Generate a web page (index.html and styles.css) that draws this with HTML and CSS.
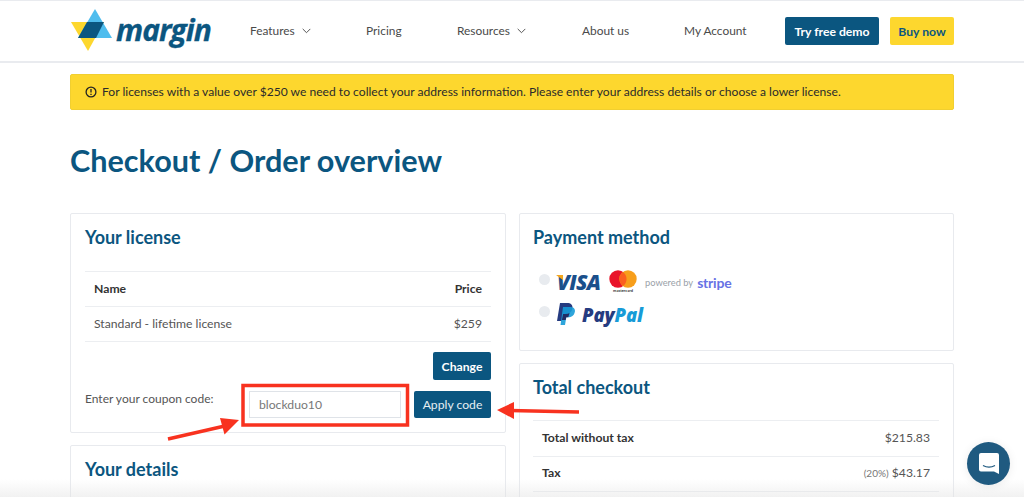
FILE: index.html
```html
<!DOCTYPE html>
<html lang="en">
<head>
<meta charset="utf-8">
<title>Checkout</title>
<link rel="stylesheet" href="styles.css">
</head>
<body>
<header class="topbar">
  <a class="brand">
    <svg class="brand-mark" width="46" height="44" viewBox="0 0 46 44">
      <polygon points="1,14 34,14 18,43" fill="#fdd72e"/>
      <polygon points="25,1 42,30 8,30" fill="#4fbdee"/>
      <polygon points="17,14 34,14 26,30 8,30" fill="#0b5680"/>
    </svg>
    <span class="brand-name">margin</span>
  </a>
  <nav class="nav">
    <a class="nav-link nav-features">Features <svg class="chev" width="9" height="6" viewBox="0 0 9 6"><path d="M.7.9 4.500 4.700 8.300.9" fill="none" stroke="#555" stroke-width="1"/></svg></a>
    <a class="nav-link nav-pricing">Pricing</a>
    <a class="nav-link nav-resources">Resources <svg class="chev" width="9" height="6" viewBox="0 0 9 6"><path d="M.7.9 4.500 4.700 8.300.9" fill="none" stroke="#555" stroke-width="1"/></svg></a>
    <a class="nav-link nav-about">About us</a>
    <a class="nav-link nav-account">My Account</a>
  </nav>
  <a class="btn btn-demo">Try free demo</a>
  <a class="btn btn-buy">Buy now</a>
</header>

<main class="page">
  <div class="alert">
    <svg class="alert-icon" width="12" height="12" viewBox="0 0 12 12"><circle cx="6" cy="6" r="4.900" fill="none" stroke="#222" stroke-width="1.300"/><path d="M6 3v3.600M6 7.800v1.200" stroke="#222" stroke-width="1.300"/></svg>
    <span>For licenses with a value over $250 we need to collect your address information. Please enter your address details or choose a lower license.</span>
  </div>

  <h1 class="title">Checkout / Order overview</h1>

  <div class="columns">
    <div class="col">
      <section class="card card-license">
        <h2 class="card-title">Your license</h2>
        <div class="license-table">
          <div class="row row-head"><b>Name</b><b>Price</b></div>
          <div class="row row-item"><span>Standard - lifetime license</span><span>$259</span></div>
        </div>
        <div class="change-row"><a class="btn btn-change">Change</a></div>
        <div class="coupon-row">
          <span class="coupon-label">Enter your coupon code:</span>
          <span class="coupon-input">blockduo10</span>
          <a class="btn btn-apply">Apply code</a>
        </div>
      </section>
      <section class="card card-details">
        <h2 class="card-title">Your details</h2>
      </section>
    </div>
    <div class="col">
      <section class="card card-payment">
        <h2 class="card-title">Payment method</h2>
        <div class="pay-row pay-card">
          <span class="radio"></span>
          <span class="visa">VISA</span>
          <span class="mc">
            <svg width="28" height="18" viewBox="0 0 28 18"><circle cx="9" cy="9" r="8.700" fill="#e9142a"/><circle cx="19" cy="9" r="8.700" fill="#f79e1b"/><path d="M14 2a8.700 8.700 0 0 1 0 14 8.700 8.700 0 0 1 0-14z" fill="#fb5f1f"/></svg>
            <span class="mc-name">mastercard</span>
          </span>
          <span class="powered">powered by</span>
          <span class="stripe">stripe</span>
        </div>
        <div class="pay-row pay-paypal">
          <span class="radio"></span>
          <svg class="pp-mark" width="19" height="22" viewBox="0 0 19 22"><path d="M4 0h7c4 0 6 2 5.400 5.500C15.700 9.500 13 11 9.500 11H7l-1.200 7H1z" fill="#253b80"/><path d="M7 4h7.500c3.500 0 5 2 4.300 5-.8 3.700-3.300 5.300-6.500 5.300h-2L9 22H4.500z" fill="#179bd7" opacity=".9"/><path d="M7.100 11h2.400c1.500 0 2.900-.3 4.100-1L12.300 14.300h-2L9.700 17H5.900z" fill="#222d65"/></svg>
          <span class="paypal"><span class="pp-dark">Pay</span><span class="pp-light">Pal</span></span>
        </div>
      </section>
      <section class="card card-total">
        <h2 class="card-title">Total checkout</h2>
        <div class="total-table">
          <div class="row row-total"><b>Total without tax</b><span>$215.83</span></div>
          <div class="row row-total"><b>Tax</b><span><small class="pct">(20%)</small> $43.17</span></div>
        </div>
      </section>
    </div>
  </div>
</main>

<div class="bottom-fade"></div>

<svg class="annotation" width="1024" height="497" viewBox="0 0 1024 497">
  <rect x="243" y="385.500" width="164.500" height="39.500" fill="none" stroke="#f8321f" stroke-width="3.500"/>
  <path d="M168 439 227 425.500" stroke="#f8321f" stroke-width="3.500"/>
  <polygon points="239,420 220,418 224.500,434.500" fill="#f8321f"/>
  <path d="M579 412 510 410.500" stroke="#f8321f" stroke-width="3.500"/>
  <polygon points="497,410 514,402 514,419" fill="#f8321f"/>
</svg>

<a class="chat">
  <svg width="22" height="24" viewBox="0 0 22 24"><path d="M3 1h16a2 2 0 0 1 2 2v19l-5-2.500H3a2 2 0 0 1-2-2V3a2 2 0 0 1 2-2z" fill="#fff"/><path d="M5 13.500c3.500 2 8.500 2 12 0" fill="none" stroke="#1f5a80" stroke-width="1.300"/></svg>
</a>
</body>
</html>
```
FILE: styles.css
```css
* { box-sizing: border-box; }
html, body { margin: 0; height: 497px; overflow: hidden; background: #fff; }
body { font-family: Lato, "Noto Sans", sans-serif; font-size: 12.200px; color: #444; position: relative; }

.topbar { height: 63px; border-top: 1px solid #e9ebef; border-bottom: 2px solid #e9ebef; padding: 7px 70px 0; display: flex; align-items: flex-start; }
.brand { display: flex; align-items: center; width: 165px; height: 44px; }
.brand-mark { flex: none; }
.brand-name { font-family: "Open Sans", sans-serif; font-weight: 700; font-style: italic; font-size: 30px; letter-spacing: -1px; color: #0b5680; margin: -2px 0 0 0; -webkit-text-stroke: .3px #0b5680; }

.nav { display: flex; font-size: 11.900px; flex: 1; height: 44px; align-items: center; color: #4a4a4a; }
.nav-link { display: flex; align-items: center; white-space: nowrap; }
.chev { margin-left: 7px; margin-top: 2px; }
.nav-features { margin-left: 15px; width: 116px; }
.nav-pricing { width: 91px; }
.nav-resources { width: 125px; }
.nav-about { width: 102px; }
.nav-account { width: 0; }

.btn { display: flex; align-items: center; justify-content: center; border-radius: 2px; font-weight: 700; font-size: 12.200px; background: #0b5680; color: #fff; white-space: nowrap; }
.btn-demo { width: 94px; height: 28px; margin-top: 9px; }
.btn-buy { width: 64px; height: 28px; margin: 9px 0 0 11px; background: #fdd72e; color: #0b5680; }

.page { padding: 11px 70px 0; }
.alert { height: 36px; background: #fdd72e; border: 1px solid #f1cf30; border-radius: 2px; display: flex; align-items: center; gap: 5px; padding: 0 0 1px 14px; color: #2b2b2b; font-size: 12.100px; white-space: nowrap; }
.alert-icon { flex: none; margin-top: 1px; }

.title { margin: 32px 0 0; height: 38px; line-height: 38px; font-size: 30.600px; font-weight: 700; color: #0b5680; white-space: nowrap; }

.columns { display: flex; gap: 13px; margin-top: 33px; }
.col { display: flex; flex-direction: column; gap: 12px; }
.col:first-child { width: 436px; }
.col:last-child { width: 435px; }

.card { background: #fff; border: 1px solid #e8eaee; border-radius: 2px; padding: 0 14px; }
.col:last-child .card { padding: 0 14px 0 13px; }
.card-title { margin: 0; font-size: 18px; font-weight: 700; color: #0b5680; line-height: 24px; padding-top: 11px; height: 36px; }

.card-license { height: 220px; }
.license-table { margin-top: 21px; }
.row { display: flex; justify-content: space-between; align-items: center; padding: 0 9px 2px; border-top: 1px solid #eceef1; }
.row b { color: #333; font-weight: 700; }
.row-head { height: 35px; }
.row-item { border-bottom: 1px solid #eceef1; color: #555; height: 36px; }

.change-row { display: flex; justify-content: flex-end; margin-top: 10px; }
.btn-change { width: 58px; height: 28px; }
.coupon-row { display: flex; margin-top: 11px; align-items: flex-start; }
.coupon-label { width: 164px; margin-top: 0; color: #555; line-height: 16px; white-space: nowrap; font-size: 12px; }
.coupon-input { width: 152px; height: 27px; border: 1px solid #dfe3e8; padding-left: 9px; line-height: 25px; color: #777; }
.btn-apply { width: 77px; height: 27px; margin-left: 13px; font-weight: 400; color: #e6eef3; }

.card-details { height: 120px; }

.card-payment { height: 138px; }
.pay-row { display: flex; align-items: center; position: relative; padding-left: 1px; }
.pay-card { margin-top: 19px; height: 26px; }
.pay-paypal { margin-top: 6px; height: 26px; }
.radio { width: 11px; height: 11px; border-radius: 50%; background: #e8ebef; margin: 5px 7px 0 5px; flex: none; align-self: flex-start; }
.visa { font-family: "Open Sans", sans-serif; font-weight: 800; font-style: italic; font-size: 21px; line-height: 22px; color: #1a4f8b; width: 52px; letter-spacing: -.7px; position: relative; }
.visa::before { content: ""; position: absolute; left: -1px; top: 4px; width: 7px; height: 5px; background: #f4a51c; clip-path: polygon(0 0, 100% 0, 100% 100%); }
.mc { display: flex; flex-direction: column; align-items: center; width: 28px; margin-top: -2px; }
.mc svg { display: block; }
.mc-name { font-size: 4px; line-height: 5px; color: #333; font-weight: 700; }
.powered { font-size: 9.300px; color: #9aa1a8; margin-left: 8px; white-space: nowrap; }
.stripe { font-size: 14px; font-weight: 700; color: #6772e5; margin-left: 4px; letter-spacing: -.2px; }
.pp-mark { flex: none; margin-left: -1px; }
.paypal { font-family: "Open Sans", sans-serif; font-weight: 800; font-style: italic; font-size: 18.500px; margin-left: 7px; letter-spacing: -.1px; }
.pp-dark { color: #253b80; }
.pp-light { color: #179bd7; }

.card-total { height: 200px; }
.total-table { margin-top: 20px; }
.row-total { height: 36px; color: #555; }
.row-total:last-child { border-bottom: 1px solid #eceef1; padding-bottom: 4px; }
.pct { font-size: 10px; color: #777; }

.bottom-fade { position: absolute; left: 0; right: 0; bottom: 0; height: 18px; background: linear-gradient(to bottom, rgba(225,225,225,0), rgba(225,225,225,.45)); }
.annotation { position: absolute; left: 0; top: 0; pointer-events: none; }
.chat { position: absolute; left: 967px; top: 442px; width: 43px; height: 43px; border-radius: 50%; background: #1f5a80; display: flex; align-items: center; justify-content: center; box-shadow: 0 1px 10px rgba(0,0,0,.08); }
```
